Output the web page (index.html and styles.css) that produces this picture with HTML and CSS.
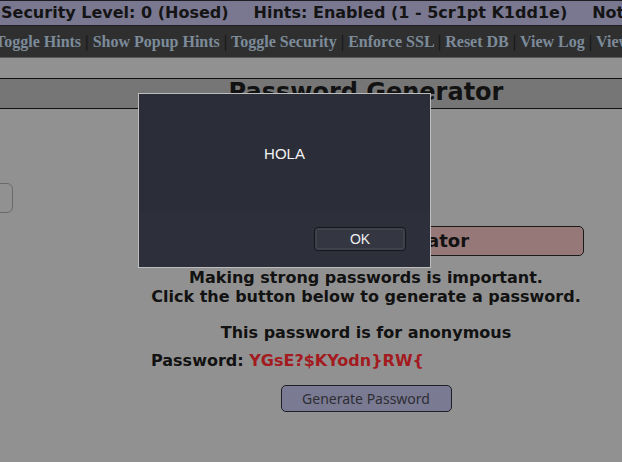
FILE: index.html
```html
<!DOCTYPE html>
<html>
<head>
<meta charset="utf-8">
<link rel="stylesheet" href="styles.css">
</head>
<body>
<div class="topbar">
  <span>Security Level: 0 (Hosed)</span>
  <span>Hints: Enabled (1 - 5cr1pt K1dd1e)</span>
  <span>Not Logged In</span>
</div>
<nav class="nav">
  <div class="nav-inner"><a>Toggle Hints</a><span class="sep"> | </span><a>Show Popup Hints</a><span class="sep"> | </span><a>Toggle Security</a><span class="sep"> | </span><a>Enforce SSL</a><span class="sep"> | </span><a>Reset DB</a><span class="sep"> | </span><a>View Log</a><span class="sep"> | </span><a>View Captured Data</a></div>
</nav>
<div class="title-band"><h1>Password Generator</h1></div>
<div class="layout">
  <aside class="sidebar"><div class="side-box"></div></aside>
  <section class="content">
    <div class="panel">
      <div class="panel-header">Password Generator</div>
      <p class="intro">Making strong passwords is important.<br>Click the button below to generate a password.</p>
      <p class="for">This password is for anonymous</p>
      <p class="pw">Password: <span class="pw-value">YGsE?$KYodn}RW{</span></p>
      <div class="actions"><button class="gen-btn">Generate Password</button></div>
    </div>
  </section>
</div>
<div class="dialog">
  <div class="dialog-body">HOLA</div>
  <div class="dialog-footer"><button class="ok-btn">OK</button></div>
</div>
</body>
</html>
```
FILE: styles.css
```css
html, body {
  margin: 0;
  padding: 0;
  background: #919191;
  width: 622px;
  height: 462px;
  overflow: hidden;
}
body {
  font-family: "DejaVu Sans", sans-serif;
  color: #121212;
  position: relative;
}
.topbar {
  display: flex;
  gap: 25px;
  white-space: nowrap;
  overflow: hidden;
  background: #7a7890;
  border-top: 1px solid #1c1c22;
  border-bottom: 1px solid #1c1c22;
  height: 24px;
  line-height: 24px;
  font-size: 16px;
  font-weight: bold;
  padding-left: 1px;
  color: #141414;
}
.nav {
  background: #2f2f2f;
  height: 31px;
  line-height: 31px;
  border-bottom: 1px solid #585858;
  white-space: nowrap;
  overflow: hidden;
  font-family: "Liberation Serif", serif;
  font-weight: bold;
  font-size: 16px;
  color: #7c8b9a;
}
.nav-inner {
  margin-left: -5px;
}
.sep {
  color: #181818;
}
.title-band {
  margin-top: 20px;
  background: #767676;
  border-top: 1px solid #111;
  border-bottom: 1px solid #111;
  height: 29px;
  padding-left: 110px;
  text-align: center;
}
.title-band h1 {
  margin: 0;
  font-size: 24px;
  line-height: 27px;
  font-weight: bold;
  color: #121212;
}
.layout {
  display: flex;
}
.sidebar {
  width: 110px;
  flex: none;
  padding-top: 74px;
}
.side-box {
  width: 30px;
  height: 28px;
  margin-left: -19px;
  border: 1px solid #6a6a6a;
  border-radius: 6px;
}
.content {
  width: 512px;
  flex: none;
  padding-top: 117px;
}
.panel {
  width: 436px;
  margin: 0 auto;
}
.panel-header {
  height: 28px;
  line-height: 28px;
  border: 1px solid #1a1a1a;
  border-radius: 5px;
  background: #967878;
  text-align: center;
  font-size: 18px;
  font-weight: bold;
}
.intro, .for, .pw {
  font-size: 16px;
  font-weight: bold;
  line-height: 18.5px;
}
.intro {
  margin: 13px 0 0;
  text-align: center;
}
.for {
  margin: 18px 0 0;
  text-align: center;
}
.pw {
  margin: 9px 0 0;
  padding-left: 3px;
}
.pw-value {
  color: #a31a1f;
}
.actions {
  margin-top: 15px;
  text-align: center;
}
.gen-btn {
  width: 171px;
  height: 27px;
  background: #7a7a93;
  border: 1px solid #1e1e24;
  border-radius: 5px;
  font-family: "Noto Sans", sans-serif;
  font-size: 14px;
  color: #2e2e34;
  padding: 0;
}
.dialog {
  position: absolute;
  left: 138px;
  top: 93px;
  width: 291px;
  height: 173px;
  border: 1px solid #bdbdbd;
  background: #2b2d38;
  display: flex;
  flex-direction: column;
}
.dialog-body {
  height: 119px;
  display: flex;
  align-items: center;
  justify-content: center;
  color: #f2f2f2;
  font-family: "Liberation Sans", sans-serif;
  font-size: 15px;
}
.dialog-footer {
  flex: 1;
  background: #2d2f3a;
  display: flex;
  justify-content: flex-end;
  align-items: flex-start;
  padding: 14px 24px 0 0;
}
.ok-btn {
  width: 92px;
  height: 24px;
  border: 1px solid #15161c;
  border-radius: 4px;
  background: #343642;
  box-shadow: inset 0 0 0 2px #3f414d;
  color: #eeeeee;
  font-family: "Liberation Sans", sans-serif;
  font-size: 14px;
  padding: 0;
}
```
